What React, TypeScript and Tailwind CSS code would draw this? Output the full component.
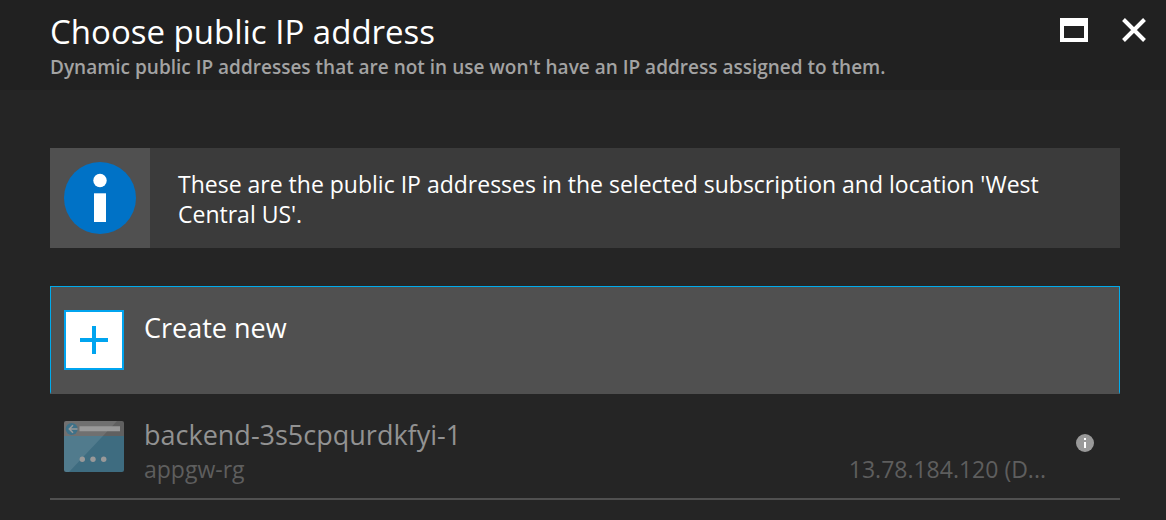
export default function App() {
  return (
    <main className="min-h-screen bg-[#252525] font-['Open_Sans',sans-serif] text-white">
      <header className="flex min-h-[90px] items-start justify-between bg-[#212121] pr-[19px] pl-[50px]">
        <div className="pt-2">
          <h1 className="text-[33px] leading-[48px] font-normal">Choose public IP address</h1>
          <p className="text-[19px] leading-[22px] font-semibold text-[#a3a3a3]">Dynamic public IP addresses that are not in use won't have an IP address assigned to them.</p>
        </div>
        <div className="flex gap-[33px] pt-[17px]">
          <button type="button" aria-label="Maximize" className="-ml-7">
            <svg width="28" height="26" viewBox="0 0 28 26"><path fill="#fff" fillRule="evenodd" d="M0 1h28v24H0zM4 9v12h20V9z" /></svg>
          </button>
          <button type="button" aria-label="Close">
            <svg width="26" height="26" viewBox="0 0 26 26"><path stroke="#fff" strokeWidth="4" d="M2.5 2.5l21 21M23.5 2.5l-21 21" /></svg>
          </button>
        </div>
      </header>
      <div className="pt-[58px] pr-[46px] pl-[50px]">
        <section className="flex min-h-[100px] bg-[#3b3b3b]">
          <div className="flex w-[100px] shrink-0 items-center justify-center bg-[#505050]">
            <svg width="72" height="72" viewBox="0 0 72 72">
              <circle cx="36" cy="36" r="36" fill="#0072c6" />
              <circle cx="36" cy="18.5" r="6.7" fill="#fff" />
              <path fill="#fff" d="M30 31.3h12V60H30z" />
            </svg>
          </div>
          <p className="pt-[21px] pr-16 pl-7 text-[23px] leading-[30px]">These are the public IP addresses in the selected subscription and location 'West Central US'.</p>
        </section>
        <button type="button" className="mt-[38px] flex h-[108px] w-full gap-5 border border-b-2 border-[#00abec] border-b-[#505050] bg-[#505050] px-[13px] pt-[23px] text-left">
          <svg width="60" height="60" viewBox="0 0 60 60">
            <path fill="#fff" stroke="#00a4ef" strokeWidth="2" d="M1 1h58v58H1z" />
            <path stroke="#00a4ef" strokeWidth="4" d="M30 16v28M16 30h28" />
          </svg>
          <span className="text-[27px] leading-[36px]">Create new</span>
        </button>
        <div className="flex h-[106px] gap-5 border-b-2 border-[#505050] pt-[26px] pr-[26px] pl-[14px]">
          <svg className="shrink-0" width="60" height="52" viewBox="0 0 60 52">
            <path fill="#3e6c80" d="M0 15h60v35a2 2 0 0 1-2 2H2a2 2 0 0 1-2-2z" />
            <path fill="#606060" d="M2 1h56a2 2 0 0 1 2 2v13H0V3a2 2 0 0 1 2-2z" />
            <path fill="#fff" opacity=".1" d="M2 1h51L5 52H2a2 2 0 0 1-2-2V3a2 2 0 0 1 2-2z" />
            <circle cx="7.7" cy="9" r="6" fill="#3e7188" />
            <path fill="none" stroke="#999" strokeWidth="1.5" d="M13.5 9H5.5M9 5.3L5.3 9 9 12.7" />
            <path fill="#999" d="M15.5 6.2H56v5H15.5z" />
            <circle cx="18.3" cy="39.3" r="2.7" fill="#999" />
            <circle cx="29" cy="39.3" r="2.7" fill="#999" />
            <circle cx="39.7" cy="39.3" r="2.7" fill="#999" />
          </svg>
          <div className="min-w-0 flex-1">
            <h2 className="text-[27px] leading-[30px] text-[#929292]">backend-3s5cpqurdkfyi-1</h2>
            <div className="flex justify-between text-[23px] leading-[38px] text-[#5e5e5e]"><span>appgw-rg</span><span>13.78.184.120 (D...</span></div>
          </div>
          <button type="button" aria-label="Details" className="ml-[10px] self-start pt-[14px]">
            <svg width="18" height="18" viewBox="0 0 18 18">
              <circle cx="9" cy="9" r="9" fill="#999" />
              <path fill="#fff" d="M8 4h2v2H8zM8 8h2v6H8z" />
            </svg>
          </button>
        </div>
      </div>
    </main>
  );
}
